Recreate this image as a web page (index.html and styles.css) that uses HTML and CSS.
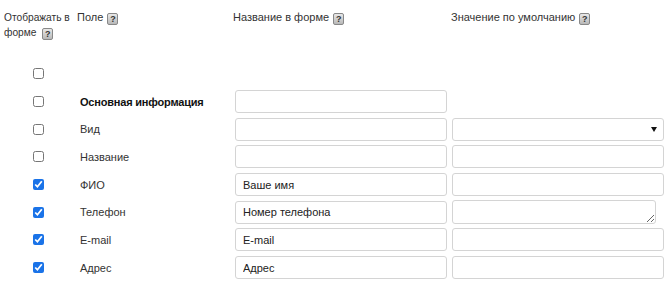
FILE: index.html
```html
<!DOCTYPE html>
<html lang="ru">
<head>
    <meta charset="UTF-8">
    <title>Поля формы</title>
    <link rel="stylesheet" href="styles.css">
</head>
<body>
    <div class="fields">
        <div class="head head-show">Отображать&nbsp;в<br>форме <span class="help">?</span></div>
        <div class="head">Поле <span class="help">?</span></div>
        <div class="head">Название в форме <span class="help">?</span></div>
        <div class="head">Значение по умолчанию <span class="help">?</span></div>

        <div class="cell check"><input type="checkbox"></div>
        <div class="cell label"></div>
        <div class="cell"></div>
        <div class="cell"></div>

        <div class="cell check"><input type="checkbox"></div>
        <div class="cell label bold">Основная информация</div>
        <div class="cell"><input class="text" type="text"></div>
        <div class="cell"></div>

        <div class="cell check"><input type="checkbox"></div>
        <div class="cell label">Вид</div>
        <div class="cell"><input class="text" type="text"></div>
        <div class="cell"><div class="select-wrap"><select class="text select"><option></option></select></div></div>

        <div class="cell check"><input type="checkbox"></div>
        <div class="cell label">Название</div>
        <div class="cell"><input class="text" type="text"></div>
        <div class="cell"><input class="text" type="text"></div>

        <div class="cell check"><input type="checkbox" checked></div>
        <div class="cell label">ФИО</div>
        <div class="cell"><input class="text" type="text" value="Ваше имя"></div>
        <div class="cell"><input class="text" type="text"></div>

        <div class="cell check"><input type="checkbox" checked></div>
        <div class="cell label">Телефон</div>
        <div class="cell"><input class="text" type="text" value="Номер телефона"></div>
        <div class="cell"><textarea class="text area"></textarea></div>

        <div class="cell check"><input type="checkbox" checked></div>
        <div class="cell label">E-mail</div>
        <div class="cell"><input class="text" type="text" value="E-mail"></div>
        <div class="cell"><input class="text" type="text"></div>

        <div class="cell check"><input type="checkbox" checked></div>
        <div class="cell label">Адрес</div>
        <div class="cell"><input class="text" type="text" value="Адрес"></div>
        <div class="cell"><input class="text" type="text"></div>
    </div>
</body>
</html>
```

FILE: styles.css
```css
body {
    margin: 0;
    background: #fff;
    color: #333;
    font-family: "Liberation Sans", Arial, sans-serif;
    font-size: 11px;
}
.fields {
    display: grid;
    grid-template-columns: 77px 156px 217px 222px;
    grid-template-rows: 60px;
    grid-auto-rows: 27.7px;
}
.head {
    padding-top: 10px;
    line-height: 15px;
    color: #333;
}
.head-show {
    padding-left: 4px;
    white-space: nowrap;
    font-size: 10.2px;
}
.head:nth-child(4) {
    padding-left: 1px;
}
.help {
    display: inline-block;
    width: 9px;
    height: 10px;
    line-height: 10px;
    border: 1px solid #888;
    border-radius: 2px;
    background: linear-gradient(#e8e8e8, #b8b8b8);
    color: #333;
    font-size: 9px;
    font-weight: bold;
    text-align: center;
    vertical-align: -1px;
    margin-left: 1px;
}
.head-show .help {
    margin-left: 3px;
}
.cell {
    display: flex;
    align-items: center;
    padding-left: 2px;
}
.check {
    justify-content: center;
    padding-left: 0;
}
.check input {
    margin: 0;
    width: 11px;
    height: 11px;
    accent-color: #1a73e8;
}
.label {
    padding-left: 3px;
    color: #333;
}
.bold {
    font-weight: bold;
    color: #111;
    letter-spacing: -0.2px;
}
.text {
    box-sizing: border-box;
    width: 212px;
    height: 23px;
    margin: 0;
    padding: 0 7px;
    border: 1px solid #d4d4d4;
    border-radius: 3px;
    background: #fff;
    color: #222;
    font-family: "Liberation Sans", Arial, sans-serif;
    font-size: 11px;
    outline: none;
}
.select {
    appearance: none;
    -webkit-appearance: none;
}
.select-wrap {
    position: relative;
}
.select-wrap::after {
    content: "";
    position: absolute;
    right: 7px;
    top: 9px;
    border-left: 3px solid transparent;
    border-right: 3px solid transparent;
    border-top: 5px solid #111;
}
.area {
    width: 204px;
    height: 24px;
    resize: both;
    vertical-align: middle;
}
```
